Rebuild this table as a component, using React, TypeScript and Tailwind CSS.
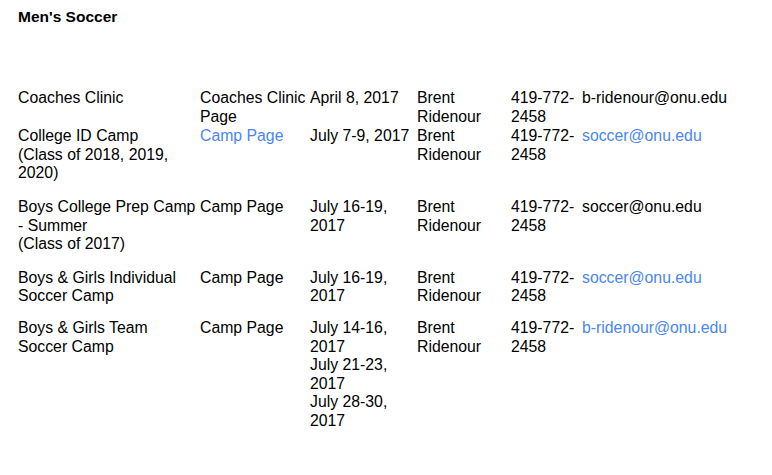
import React from 'react';

type Camp = {
  name: string[];
  page: string[];
  pageLink?: boolean;
  dates: string[];
  email: string;
  emailLink?: boolean;
  pad: string;
};

const camps: Camp[] = [
  {
    name: ['Coaches Clinic'],
    page: ['Coaches Clinic', 'Page'],
    dates: ['April 8, 2017'],
    email: 'b-ridenour@onu.edu',
    pad: 'pb-[1px]',
  },
  {
    name: ['College ID Camp', '(Class of 2018, 2019,', '2020)'],
    page: ['Camp Page'],
    pageLink: true,
    dates: ['July 7-9, 2017'],
    email: 'soccer@onu.edu',
    emailLink: true,
    pad: 'pb-[16px]',
  },
  {
    name: ['Boys College Prep Camp', '- Summer', '(Class of 2017)'],
    page: ['Camp Page'],
    dates: ['July 16-19,', '2017'],
    email: 'soccer@onu.edu',
    pad: 'pb-[15px]',
  },
  {
    name: ['Boys & Girls Individual', 'Soccer Camp'],
    page: ['Camp Page'],
    dates: ['July 16-19,', '2017'],
    email: 'soccer@onu.edu',
    emailLink: true,
    pad: 'pb-[14px]',
  },
  {
    name: ['Boys & Girls Team', 'Soccer Camp'],
    page: ['Camp Page'],
    dates: ['July 14-16,', '2017', 'July 21-23,', '2017', 'July 28-30,', '2017'],
    email: 'b-ridenour@onu.edu',
    emailLink: true,
    pad: 'pb-[1px]',
  },
];

const Lines = ({ lines }: { lines: string[] }) => (
  <>
    {lines.map((l, i) => (
      <div key={i} className="whitespace-nowrap">
        {l}
      </div>
    ))}
  </>
);

export default function App() {
  return (
    <div className="min-h-screen bg-white text-black text-[15.8px] leading-[18.4px] font-['Liberation_Sans',Arial,sans-serif] pl-[18px] pt-[8px]">
      <h1 className="font-bold text-[15.5px]">Men's Soccer</h1>
      <div className="mt-[63px] flex flex-col">
        {camps.map((c, i) => (
          <div key={i} className={`flex ${c.pad}`}>
            <div className="w-[182px]">
              <Lines lines={c.name} />
            </div>
            <div className={`w-[110px] ${c.pageLink ? 'text-[#4a86f3]' : ''}`}>
              <Lines lines={c.page} />
            </div>
            <div className="w-[107px]">
              <Lines lines={c.dates} />
            </div>
            <div className="w-[94px]">
              <div>Brent</div>
              <div>Ridenour</div>
            </div>
            <div className="w-[71px]">
              <div>419-772-</div>
              <div>2458</div>
            </div>
            <div className={c.emailLink ? 'text-[#4a86f3]' : ''}>{c.email}</div>
          </div>
        ))}
      </div>
    </div>
  );
}
